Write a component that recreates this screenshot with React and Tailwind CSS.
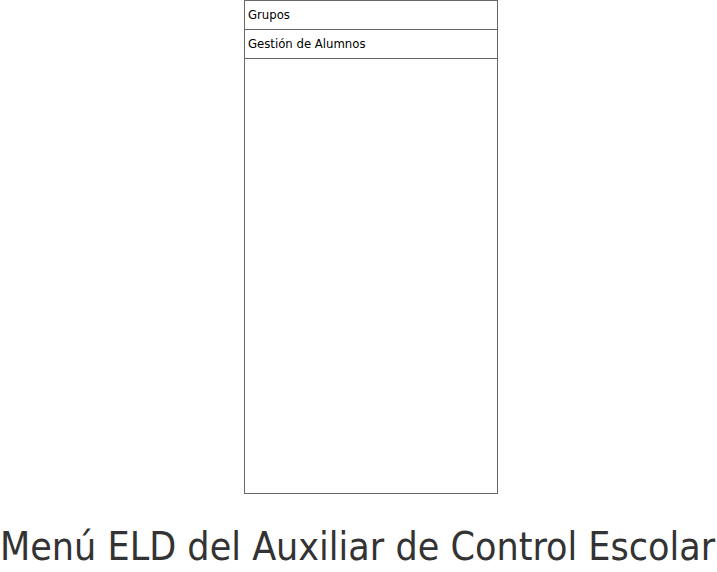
const items = ["Grupos", "Gestión de Alumnos"];

export default function App() {
  return (
    <div className="min-h-[572px] overflow-hidden bg-white font-['DejaVu_Sans_Condensed','DejaVu_Sans',sans-serif] text-[#333]">
      <div className="ml-[244px] flex h-[494px] w-[254px] flex-col border border-[#666]">
        {items.map((item) => (
          <div
            key={item}
            className="h-[29px] border-b border-[#666] pl-[3px] pt-[6px] text-[13px] leading-[16px] text-black"
          >
            {item}
          </div>
        ))}
      </div>

      <h1 className="mt-[30px] whitespace-nowrap text-[39px] leading-[46px]">
        Menú ELD del Auxiliar de Control Escolar
      </h1>
    </div>
  );
}
